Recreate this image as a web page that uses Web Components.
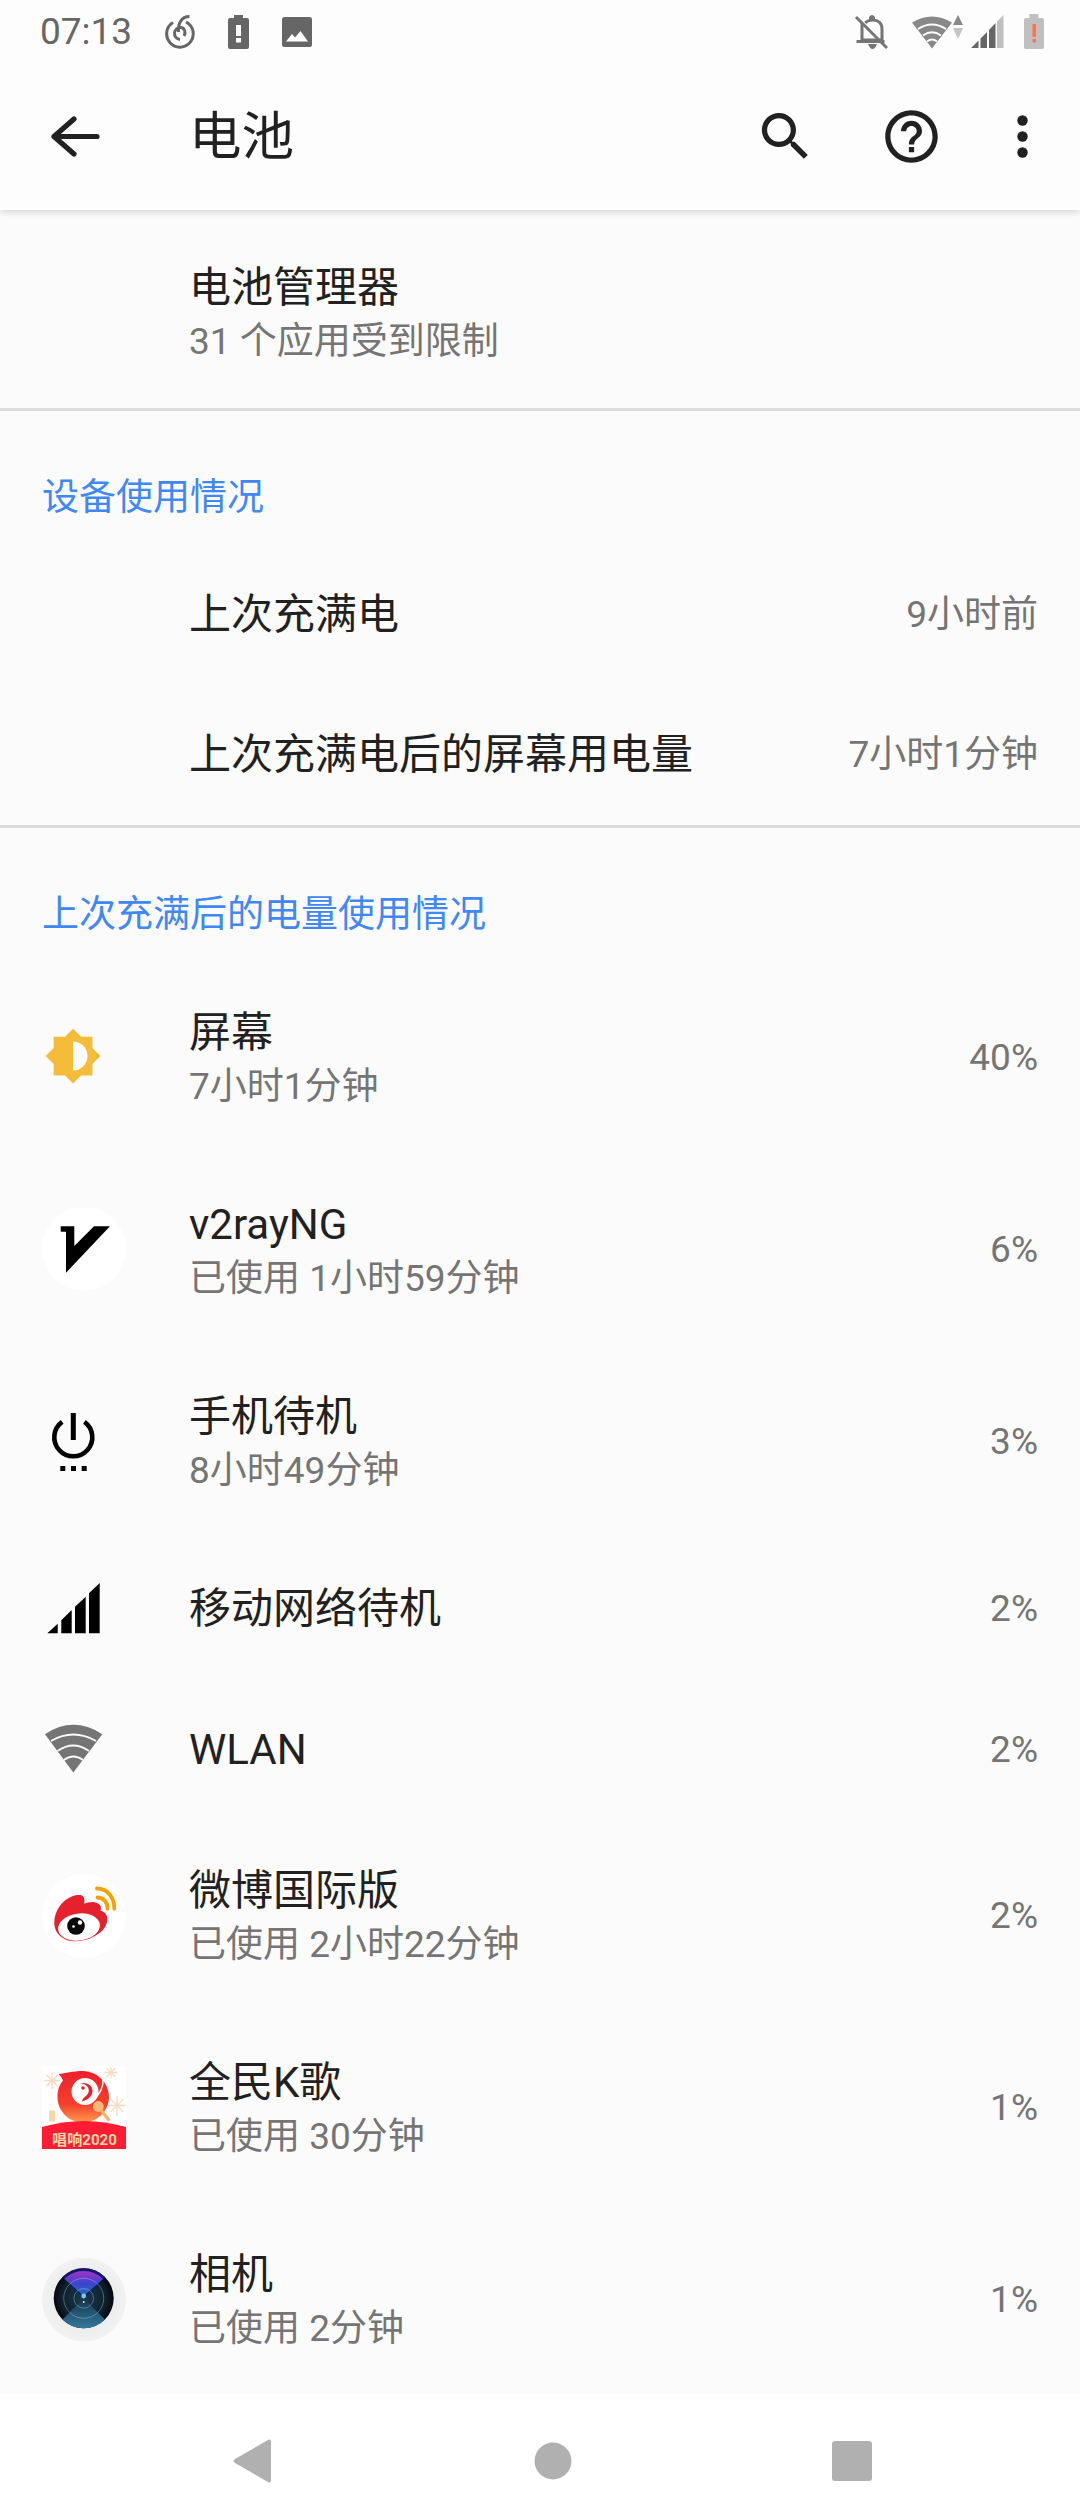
<!DOCTYPE html>
<html lang="zh-CN">
<head>
<meta charset="utf-8">
<title>电池</title>
<style>
html,body{margin:0;padding:0;}
body{width:1080px;height:2520px;overflow:hidden;background:#fbfbfb;font-family:Roboto,"Noto Sans CJK SC",sans-serif;display:flex;flex-direction:column;}
svg{display:block;}
</style>
</head>
<body>

<battery-screen>
  <status-bar slot="top"></status-bar>
  <app-toolbar slot="top" heading="电池"></app-toolbar>

  <pref-row first heading="电池管理器" summary="31 个应用受到限制"></pref-row>
  <list-divider></list-divider>

  <section-head>设备使用情况</section-head>
  <pref-row tight heading="上次充满电" value="9小时前"></pref-row>
  <pref-row tight heading="上次充满电后的屏幕用电量" value="7小时1分钟"></pref-row>
  <list-divider></list-divider>

  <section-head>上次充满后的电量使用情况</section-head>

  <pref-row heading="屏幕" summary="7小时1分钟" value="40%">
    <svg slot="icon" width="84" height="84" viewBox="0 0 84 84"><g transform="translate(2 11) scale(2.42)"><path fill="#f4bc38" d="M20 15.31L23.31 12 20 8.69V4h-4.69L12 .69 8.69 4H4v4.69L.69 12 4 15.31V20h4.69L12 23.31 15.31 20H20v-4.69zM12 18V6c3.31 0 6 2.69 6 6s-2.69 6-6 6z"/></g></svg>
  </pref-row>

  <pref-row heading="v2rayNG" summary="已使用 1小时59分钟" value="6%">
    <svg slot="icon" width="84" height="84" viewBox="0 0 84 84"><circle cx="42" cy="41" r="42" fill="#fff"/><path d="M18.7 18.3H32.3V38L52 18.3H68L24 64.700V23.700H18.7z" fill="#000"/></svg>
  </pref-row>

  <pref-row heading="手机待机" summary="8小时49分钟" value="3%">
    <svg slot="icon" width="84" height="84" viewBox="0 0 84 84"><path d="M20.2 21.8A19 19 0 1 0 42.4 21.8" fill="none" stroke="#000" stroke-width="4.6"/><rect x="28.8" y="13" width="5" height="27" fill="#000"/><rect x="18.3" y="66" width="5" height="5" fill="#000"/><rect x="29" y="66" width="5" height="5" fill="#000"/><rect x="39.7" y="66" width="5" height="5" fill="#000"/></svg>
  </pref-row>

  <pref-row heading="移动网络待机" value="2%">
    <svg slot="icon" width="84" height="84" viewBox="0 0 84 84"><path fill="#000" d="M5.3 66.3L15.7 56.7V66.3zM19.3 53.3L29.7 43V66.3H19.3zM33 39.7L43.7 29.7V66.3H33zM47 26.3L57.7 16V66.3H47z"/></svg>
  </pref-row>

  <pref-row heading="WLAN" value="2%">
    <svg slot="icon" width="84" height="84" viewBox="0 0 84 84"><path fill="#757575" d="M31.3 64.5L3 26.2Q31.3 7.5 60.3 26.2z"/><g fill="none" stroke="#fbfbfb" stroke-width="1.8"><path d="M9 33Q31.3 20 54 33"/><path d="M15.500 43Q31.3 32 47 43"/><path d="M22 52Q31.3 45 41 52"/></g></svg>
  </pref-row>

  <pref-row heading="微博国际版" summary="已使用 2小时22分钟" value="2%">
    <svg slot="icon" width="84" height="84" viewBox="0 0 84 84"><circle cx="42" cy="42" r="42" fill="#fff"/><path fill="#e6212e" d="M12.300 49.700C12 41 16 33 21.300 28C27 22.500 33 20.500 38 21C42 21.500 43 25 42.300 29.700C47 27.700 52 27 56 29.500C60.500 32 58.500 36 58.500 36.500C63 38 65.800 41 65.300 46.300C64.500 54 58 60 50 63.500C43 66.800 36 67.600 30 67C20 66 12.600 59 12.300 49.700z"/><ellipse cx="37" cy="53" rx="21" ry="13.500" transform="rotate(-8 37 53)" fill="#fff"/><circle cx="34" cy="52" r="8.800" fill="#0a0a0a"/><circle cx="38" cy="48.500" r="2.200" fill="#fff"/><circle cx="31.500" cy="52.500" r="1.300" fill="#fff"/><g fill="none" stroke="#f5a100" stroke-width="3.800" stroke-linecap="round"><path d="M55 14.500C65 14.500 72.500 23 72.300 34.700"/><path d="M55.500 23.500C61 23.500 66 28 65.500 34.700"/></g></svg>
  </pref-row>

  <pref-row heading="全民K歌" summary="已使用 30分钟" value="1%">
    <svg slot="icon" width="84" height="84" viewBox="0 0 84 84">
      <defs>
        <linearGradient id="kBird" x1="0" y1="0" x2="0" y2="1"><stop offset="0" stop-color="#ef1f2c"/><stop offset=".65" stop-color="#f5402c"/><stop offset="1" stop-color="#ff9a4a"/></linearGradient>
      </defs>
      <rect width="84" height="83" fill="#fff"/>
      <g transform="translate(0 -2.500)">
        <g stroke="#f9dcc0" stroke-width="1.400" fill="none" stroke-linecap="round">
          <path d="M10 9V25M2.500 17H17.500M4.800 11.800L15.200 22.200M15.200 11.800L4.800 22.200"/>
          <path d="M69 4V14M63 9H75M65 5L73 13M73 5L65 13"/>
          <path d="M75 33V52M66 42H84M69 36L81 48M81 36L69 48"/>
        </g>
        <rect x="7" y="47" width="6" height="11" fill="#f7d6a8"/>
        <path d="M16.500 10.500C24 10 30 7.500 41 7.500C56 8 67 20 67 33C67 48 55 59 41 59C27 59 15.500 48 15.500 33C15.500 25 18 21 21 17C20 14.500 18.500 12.500 16.500 10.500z" fill="url(#kBird)"/>
        <circle cx="43" cy="28" r="13.500" fill="#fff"/>
        <path d="M38 20C44 20 48 24 46.500 29C45 33 41 33 40 38C44 37 50 34 50.500 28C51 22 45 18 38 20z" fill="#e8202c"/>
        <circle cx="41" cy="24.500" r="1.800" fill="#e8202c"/>
        <path d="M60 13C63 21 58 32 50 37" fill="none" stroke="#fff" stroke-width="1.400"/>
        <path d="M60 48L66.500 56" stroke="#f5b46e" stroke-width="3.400" stroke-linecap="round"/>
        <circle cx="56.300" cy="43" r="5.400" fill="#f9b97a"/>
      </g>
      <path d="M0 61Q42 49 84 61V83H0z" fill="#fb1d33"/>
      <text x="10" y="79" textLength="65" lengthAdjust="spacingAndGlyphs" font-family="Roboto,'Noto Sans CJK SC',sans-serif" font-weight="700" font-size="15" fill="#fcd6a8">唱响2020</text>
    </svg>
  </pref-row>

  <pref-row heading="相机" summary="已使用 2分钟" value="1%">
    <svg slot="icon" width="84" height="84" viewBox="0 0 84 84">
      <defs>
        <radialGradient id="camBg" cx=".5" cy=".5" r=".5"><stop offset="0" stop-color="#dfe1e3"/><stop offset="1" stop-color="#f2f2f2"/></radialGradient>
        <radialGradient id="camLens" cx=".5" cy=".5" r=".5"><stop offset="0" stop-color="#1a3b50"/><stop offset=".75" stop-color="#0d1f2c"/><stop offset="1" stop-color="#05070c"/></radialGradient>
        <linearGradient id="camTop" x1="0" y1="0" x2="0" y2="1"><stop offset="0" stop-color="#a332c4"/><stop offset=".5" stop-color="#3c44d0"/><stop offset="1" stop-color="#1f6fb0"/></linearGradient>
        <linearGradient id="camBot" x1="0" y1="0" x2="0" y2="1"><stop offset="0" stop-color="#15364c"/><stop offset="1" stop-color="#33789c"/></linearGradient>
      </defs>
      <circle cx="42" cy="41.500" r="42" fill="url(#camBg)"/>
      <circle cx="41.700" cy="40.300" r="30" fill="url(#camLens)"/>
      <path d="M41.700 10.300A30 30 0 0 1 62.900 19.100L41.700 40.300L20.500 19.100A30 30 0 0 1 41.700 10.300z" fill="#10186a"/>
      <path d="M41.700 13A27 27 0 0 1 61 21L41.700 38L22.400 21A27 27 0 0 1 41.700 13z" fill="url(#camTop)"/>
      <path d="M41.700 40.300L62.900 61.500A30 30 0 0 1 20.500 61.500z" fill="url(#camBot)"/>
      <g fill="none" stroke="#c8dcec" stroke-opacity=".35" stroke-width="1">
        <circle cx="41.700" cy="40.300" r="20"/>
        <circle cx="41.700" cy="40.300" r="9.800"/>
      </g>
      <circle cx="41.700" cy="38" r="2.400" fill="#7cc8ee"/>
      <circle cx="41.700" cy="44" r=".9" fill="#e8f2f8"/>
    </svg>
  </pref-row>

  <nav-bar slot="bottom"></nav-bar>
</battery-screen>

<script>
// page frame: top bars, scrolling list, nav bar
const screenTpl = document.createElement('template');
screenTpl.innerHTML = `
<style>
:host{display:flex;flex-direction:column;height:2520px;overflow:hidden;color:#212121;}
.top{position:relative;z-index:2;background:#fdfdfd;box-shadow:0 2px 7px rgb(0 0 0 / 0.16);}
.list{flex:1;min-height:0;overflow:hidden;display:flex;flex-direction:column;}
</style>
<div class="top"><slot name="top"></slot></div>
<div class="list"><slot></slot></div>
<slot name="bottom"></slot>`;

class BatteryScreen extends HTMLElement{
  constructor(){
    super();
    this.attachShadow({mode:'open'});
    this.shadowRoot.appendChild(screenTpl.content.cloneNode(true));
  }
}

const statusTpl = document.createElement('template');
statusTpl.innerHTML = `
<style>
:host{display:flex;align-items:center;height:63px;padding:0 36px 0 40px;font-size:37px;color:#666;box-sizing:border-box;}
.time{width:125px;line-height:63px;}
.left{display:flex;align-items:center;flex:1;gap:33px;}
.right{display:flex;align-items:center;}
svg{display:block;}
</style>
<span class="time">07:13</span>
<div class="left">
  <svg width="30" height="35" viewBox="0 0 30 35"><g fill="none" stroke="#666" stroke-width="3"><path d="M8 8.500A13.300 13.300 0 1 0 21 8"/><path d="M15 25.500A6 6 0 1 1 16 13.500C20 14 21 19 19 22"/><path d="M13.500 18C13 10 16 2.500 24.500 2.500"/></g></svg>
  <svg width="21" height="34" viewBox="0 0 21 34"><path fill="#666" d="M6 0H15V3H19Q21 3 21 5V32Q21 34 19 34H2Q0 34 0 32V5Q0 3 2 3H6z"/><rect x="8" y="10" width="5" height="11" fill="#fff"/><rect x="8" y="23" width="5" height="4.500" fill="#fff"/></svg>
  <svg width="30" height="30" viewBox="0 0 30 30" style="margin-left:0"><rect width="30" height="30" rx="2.500" fill="#666"/><path fill="#fff" d="M4 24.500L10 17L13 20.500L18.500 14L26 24.500z"/></svg>
</div>
<div class="right">
  <svg width="34" height="36" viewBox="0 0 34 36" style="margin-right:24px"><g fill="none" stroke="#757575" stroke-width="3"><path d="M8 9V26H28V15C28 9 24 6 19 6C16 6 13 7 11.500 9"/><path d="M4 27.500H29" stroke-linecap="square"/><path d="M2 3L33 34"/></g><path fill="#757575" d="M15 3Q18 -1 21 3V7H15zM14 30H23Q21 35 18.500 35T14 30z"/></svg>
  <svg width="40" height="34" viewBox="0 0 40 34"><path fill="#888" d="M20 33.500L0 7.500Q20 -4.500 40 7.500z"/><g fill="none" stroke="#fdfdfd" stroke-width="1.800"><path d="M6 14Q20 5 34 14"/><path d="M11 20.500Q20 14 29 20.500"/><path d="M15 26.500Q20 22.500 25 26.500"/></g></svg>
  <svg width="10" height="24" viewBox="0 0 10 24" style="margin:-9px 8px 0 1px"><path fill="#888" d="M5 0L10 10H0z"/><path fill="#c4c4c4" d="M0 13H10L5 24z"/></svg>
  <svg width="33" height="33" viewBox="0 0 33 33" style="margin-right:20px"><path fill="#666" d="M0 33L7.500 25.500V33zM9.500 23.500L16 17V33H9.500zM18 15L24.500 8V33H18z"/><path fill="#c0c0c0" d="M26 6.500L32.500 0V33H26z"/></svg>
  <svg width="20" height="35" viewBox="0 0 20 35"><path fill="#c0c0c0" d="M5.500 0H14.500V4H18Q20 4 20 6V33Q20 35 18 35H2Q0 35 0 33V6Q0 4 2 4H5.500z"/><rect x="8.500" y="10" width="3.400" height="13" fill="#ff7043"/><rect x="8.500" y="25" width="3.400" height="3.400" fill="#ff7043"/></svg>
</div>`;

class StatusBar extends HTMLElement{
  constructor(){
    super();
    this.attachShadow({mode:'open'});
    this.shadowRoot.appendChild(statusTpl.content.cloneNode(true));
  }
}

const toolbarTpl = document.createElement('template');
toolbarTpl.innerHTML = `
<style>
:host{display:flex;align-items:center;height:147px;padding-left:42px;padding-right:9px;box-sizing:border-box;}
.nav{width:147px;flex:none;}
h1{flex:1;margin:0;padding-top:2px;font-weight:400;font-size:52.5px;line-height:63px;color:#212121;}
.act{width:126px;height:63px;display:flex;justify-content:center;}
.more{width:96.5px;}
svg{display:block;}
</style>
<div class="nav"><svg width="63" height="63" viewBox="0 0 63 63"><path d="M55 31.500H12M32 14L12 31.500L32 49" fill="none" stroke="#212121" stroke-width="5.200" stroke-linecap="round" stroke-linejoin="round"/></svg></div>
<h1 id="heading"></h1>
<div class="act"><svg width="63" height="63" viewBox="0 0 24 24"><path fill="#212121" d="M15.500 14h-.79l-.28-.27C15.410 12.590 16 11.110 16 9.500 16 5.910 13.090 3 9.500 3S3 5.910 3 9.500 5.910 16 9.500 16c1.610 0 3.090-.59 4.230-1.570l.27.28v.79l5 4.990L20.490 19l-4.990-5zm-6 0C7.010 14 5 11.990 5 9.500S7.010 5 9.500 5 14 7.010 14 9.500 11.990 14 9.500 14z"/></svg></div>
<div class="act"><svg width="63" height="63" viewBox="0 0 24 24"><path fill="#212121" d="M11 18h2v-2h-2v2zm1-16C6.480 2 2 6.480 2 12s4.480 10 10 10 10-4.480 10-10S17.520 2 12 2zm0 18c-4.410 0-8-3.590-8-8s3.590-8 8-8 8 3.590 8 8-3.590 8-8 8zm0-14c-2.210 0-4 1.790-4 4h2c0-1.100.9-2 2-2s2 .9 2 2c0 2-3 1.750-3 5h2c0-2.250 3-2.500 3-5 0-2.210-1.790-4-4-4z"/></svg></div>
<div class="act more"><svg width="63" height="63" viewBox="0 0 63 63"><circle cx="31.500" cy="15.500" r="5.200" fill="#212121"/><circle cx="31.500" cy="31.500" r="5.200" fill="#212121"/><circle cx="31.500" cy="47.500" r="5.200" fill="#212121"/></svg></div>`;

class AppToolbar extends HTMLElement{
  constructor(){
    super();
    this.attachShadow({mode:'open'});
    this.shadowRoot.appendChild(toolbarTpl.content.cloneNode(true));
    this.shadowRoot.querySelector('#heading').textContent = this.getAttribute('heading');
  }
}

const rowTpl = document.createElement('template');
rowTpl.innerHTML = `
<style>
:host{display:flex;align-items:center;padding:42.5px 42px;flex:none;}
:host([first]){padding:50px 42px 41px;}
:host([tight]){padding:42px 42px;}
.icon{width:147px;flex:none;height:56px;display:flex;align-items:center;}
.text{flex:1;min-width:0;}
.title{font-size:42px;line-height:56px;color:#212121;}
.sub{font-size:37px;line-height:51px;color:#757575;}
.sub:empty{display:none;}
.value{font-size:37px;line-height:50px;color:#757575;}
</style>
<div class="icon"><slot name="icon"></slot></div>
<div class="text"><div class="title"></div><div class="sub"></div></div>
<div class="value"></div>`;

class PrefRow extends HTMLElement{
  constructor(){
    super();
    this.attachShadow({mode:'open'});
    this.shadowRoot.appendChild(rowTpl.content.cloneNode(true));
    this.shadowRoot.querySelector('.title').textContent = this.getAttribute('heading');
    this.shadowRoot.querySelector('.sub').textContent = this.getAttribute('summary') || '';
    this.shadowRoot.querySelector('.value').textContent = this.getAttribute('value') || '';
  }
}

const headTpl = document.createElement('template');
headTpl.innerHTML = `
<style>
:host{display:block;flex:none;padding:63px 42px 23px;font-size:37px;line-height:48px;color:#4088f5;}
</style>
<slot></slot>`;

class SectionHead extends HTMLElement{
  constructor(){
    super();
    this.attachShadow({mode:'open'});
    this.shadowRoot.appendChild(headTpl.content.cloneNode(true));
  }
}

const dividerTpl = document.createElement('template');
dividerTpl.innerHTML = `<style>:host{display:block;flex:none;height:3px;background:#dcdcdc;}</style>`;

class ListDivider extends HTMLElement{
  constructor(){
    super();
    this.attachShadow({mode:'open'});
    this.shadowRoot.appendChild(dividerTpl.content.cloneNode(true));
  }
}

const navTpl = document.createElement('template');
navTpl.innerHTML = `
<style>
:host{display:grid;grid-template-columns:repeat(3,300px);height:126px;box-sizing:border-box;padding:7px 0 0 102px;align-items:center;justify-items:center;background:#fff;flex:none;}
svg{display:block;}
</style>
<svg width="40" height="44" viewBox="0 0 40 44"><path fill="#b0b0b0" d="M36 1Q39 -.5 39 3V41Q39 44.500 36 43L3 24Q0 22 3 20z"/></svg>
<svg width="38" height="38" viewBox="0 0 38 38" style="margin-left:2px"><circle cx="19" cy="19" r="18.500" fill="#b0b0b0"/></svg>
<svg width="40" height="40" viewBox="0 0 40 40"><rect width="40" height="40" rx="3" fill="#b0b0b0"/></svg>`;

class NavBar extends HTMLElement{
  constructor(){
    super();
    this.attachShadow({mode:'open'});
    this.shadowRoot.appendChild(navTpl.content.cloneNode(true));
  }
}

customElements.define('battery-screen',BatteryScreen);
customElements.define('status-bar',StatusBar);
customElements.define('app-toolbar',AppToolbar);
customElements.define('pref-row',PrefRow);
customElements.define('section-head',SectionHead);
customElements.define('list-divider',ListDivider);
customElements.define('nav-bar',NavBar);
</script>
</body>
</html>
